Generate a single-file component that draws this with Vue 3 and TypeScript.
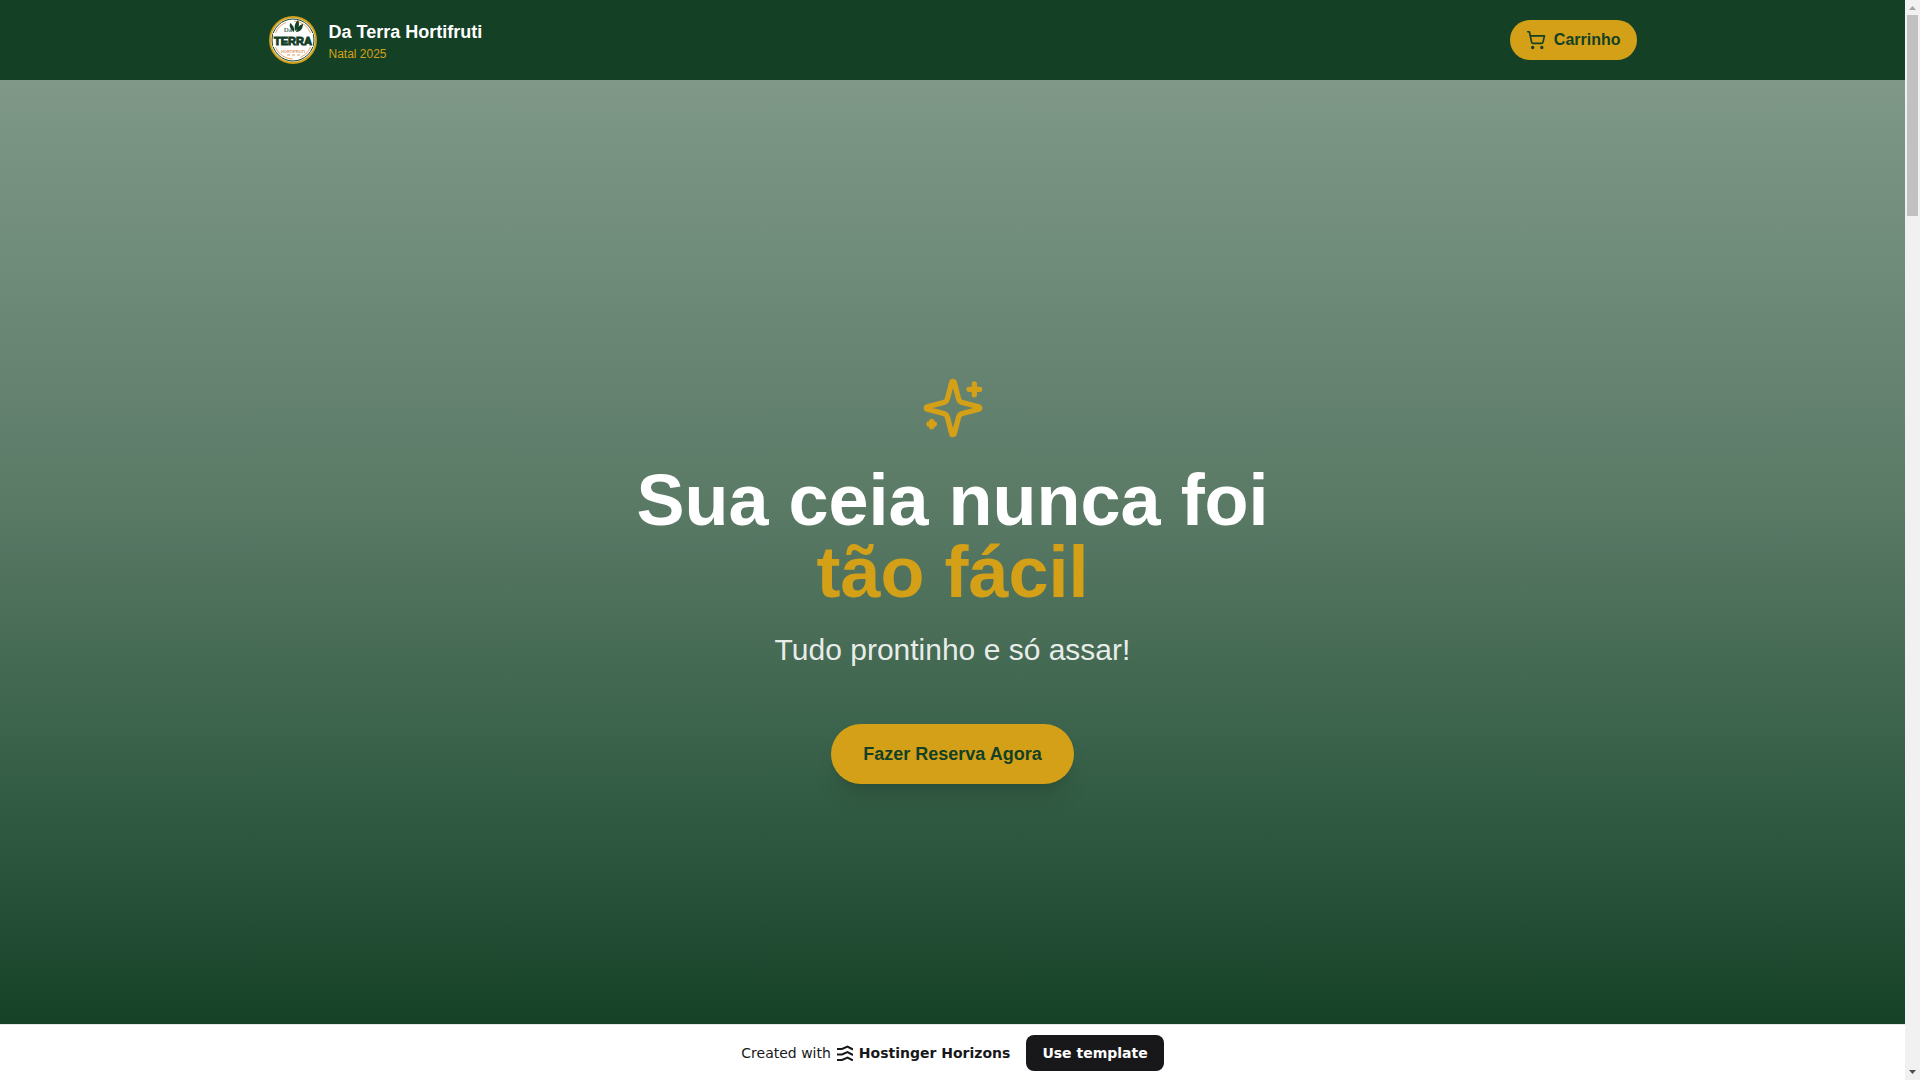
<script setup lang="ts">
const brand = { name: 'Da Terra Hortifruti', season: 'Natal 2025' }
</script>

<template>
  <div class="window">
    <div class="page">
      <header class="header">
        <div class="container">
          <div class="brand">
            <svg class="logo" viewBox="0 0 48 48" role="img" aria-label="Da Terra">
              <circle cx="24" cy="24" r="24" fill="#d4a017" />
              <circle cx="24" cy="24" r="22" fill="#fff" />
              <circle cx="24" cy="24" r="21" fill="none" stroke="#144026" stroke-width="1" />
              <circle cx="24" cy="24" r="19" fill="none" stroke="#e8a560" stroke-width="1" stroke-dasharray="22 8" />
              <path d="M4 17h40v14H4z" fill="#fff" />
              <text x="19" y="16" class="logo-da">Da</text>
              <path d="M25 16c-3-2-5-5-4-9 3 2 5 5 4 9zM26 15c-1-5 0-8 3-11 2 4 1 8-3 11zM27 16c1-4 3-7 7-8 0 5-3 8-7 8z" fill="#144026" />
              <text x="24" y="29" class="logo-terra">TERRA</text>
              <text x="24" y="37" class="logo-small">HORTIFRUTI</text>
              <path d="M18 39h3m2 0h3m2 0h3" stroke="#dc9a68" stroke-width="1" />
            </svg>
            <div>
              <div class="brand-name">{{ brand.name }}</div>
              <div class="brand-season">{{ brand.season }}</div>
            </div>
          </div>
          <button class="cart" type="button">
            <svg class="cart-icon" viewBox="0 0 24 24" aria-hidden="true">
              <circle cx="8" cy="21" r="1" />
              <circle cx="19" cy="21" r="1" />
              <path d="M2.05 2.05h2l2.66 12.42a2 2 0 0 0 2 1.58h9.78a2 2 0 0 0 1.95-1.57l1.65-7.43H5.12" />
            </svg>
            Carrinho
          </button>
        </div>
      </header>

      <main class="hero">
        <svg class="sparkles" viewBox="0 0 24 24" aria-hidden="true">
          <path d="M9.937 15.5A2 2 0 0 0 8.5 14.063l-6.135-1.582a.5.5 0 0 1 0-.962L8.5 9.936A2 2 0 0 0 9.937 8.5l1.582-6.135a.5.5 0 0 1 .963 0L14.063 8.5A2 2 0 0 0 15.5 9.937l6.135 1.581a.5.5 0 0 1 0 .964L15.5 14.063a2 2 0 0 0-1.437 1.437l-1.582 6.135a.5.5 0 0 1-.963 0z" />
          <path d="M20 3v4M22 5h-4M4 17v2M5 18H3" />
        </svg>
        <h1>Sua ceia nunca foi<br /><span>tão fácil</span></h1>
        <p>Tudo prontinho e só assar!</p>
        <button class="reserve" type="button">Fazer Reserva Agora</button>
      </main>

      <footer class="banner">
        <span>Created with</span>
        <svg class="waves" viewBox="0 0 16 16" aria-hidden="true">
          <path d="M0 4h5l5.500-2.500L16 4.500M0 9.500h5L10.500 7 16 10M0 15h5l5.500-2.500L16 15.500" />
        </svg>
        <strong>Hostinger Horizons</strong>
        <button class="template" type="button">Use template</button>
      </footer>
    </div>

    <div class="scrollbar" aria-hidden="true">
      <svg viewBox="0 0 15 15"><path d="M4 10h7L7.500 6z" fill="#a3a3a3" /></svg>
      <div class="thumb"></div>
      <svg class="down" viewBox="0 0 15 15"><path d="M4 5h7L7.500 9z" fill="#505050" /></svg>
    </div>
  </div>
</template>

<style>
body {
  margin: 0;
}
</style>

<style scoped>
.window {
  display: flex;
  min-height: 100vh;
  font-family: "Liberation Sans", Arial, sans-serif;
}
.page {
  flex: 1;
  display: flex;
  flex-direction: column;
}
button {
  border: 0;
  font-family: inherit;
  font-weight: 700;
  cursor: pointer;
}
.header {
  background: #144026;
}
.container {
  box-sizing: border-box;
  max-width: 1400px;
  height: 80px;
  margin: 0 auto;
  padding: 0 16px;
  display: flex;
  align-items: center;
  justify-content: space-between;
}
.brand {
  display: flex;
  align-items: center;
  gap: 12px;
}
.logo {
  width: 48px;
  height: 48px;
}
.logo-da {
  font: 700 7px "Liberation Serif", serif;
  text-anchor: middle;
  fill: #5d7b69;
}
.logo-terra {
  font: 700 11px "Liberation Sans", sans-serif;
  text-anchor: middle;
  fill: #144026;
  stroke: #144026;
  stroke-width: 1px;
}
.logo-small {
  font: 700 4px "Liberation Sans", sans-serif;
  text-anchor: middle;
  fill: #dc9a68;
}
.brand-name {
  font-size: 18px;
  line-height: 28px;
  font-weight: 700;
  color: #fff;
}
.brand-season {
  font-size: 12px;
  line-height: 16px;
  color: #d4a017;
}
.cart {
  display: flex;
  align-items: center;
  gap: 8px;
  height: 40px;
  padding: 0 16px;
  border-radius: 20px;
  background: #d4a017;
  color: #144026;
  font-size: 16px;
}
.cart-icon,
.sparkles {
  fill: none;
  stroke: currentColor;
  stroke-width: 2;
  stroke-linecap: round;
  stroke-linejoin: round;
}
.cart-icon {
  width: 20px;
  height: 20px;
}
.hero {
  flex: 1;
  display: flex;
  flex-direction: column;
  align-items: center;
  justify-content: center;
  padding-top: 56px;
  text-align: center;
  background: linear-gradient(to bottom, #7f9888 0%, #5a7a66 45%, #345d45 75%, #164228 100%);
}
.sparkles {
  width: 64px;
  height: 64px;
  color: #d4a017;
}
h1 {
  margin: 24px 0;
  font-size: 72px;
  line-height: 72px;
  font-weight: 700;
  color: #fff;
}
h1 span {
  color: #d4a017;
}
p {
  margin: 0 0 56px;
  font-size: 30px;
  line-height: 36px;
  color: rgba(255, 255, 255, 0.9);
}
.reserve {
  height: 60px;
  padding: 0 32px;
  border-radius: 30px;
  background: #d4a017;
  color: #144026;
  font-size: 18px;
  box-shadow: 0 20px 25px -5px rgba(0, 0, 0, 0.1), 0 8px 10px -6px rgba(0, 0, 0, 0.1);
}
.banner {
  box-sizing: border-box;
  height: 56px;
  border-top: 1px solid #e5e7eb;
  background: #fff;
  display: flex;
  align-items: center;
  justify-content: center;
  gap: 6px;
  font-family: "DejaVu Sans", sans-serif;
  font-size: 14px;
  color: #18181a;
}
.waves {
  width: 16px;
  height: 16px;
  fill: none;
  stroke: currentColor;
  stroke-width: 2;
}
.template {
  height: 36px;
  margin-left: 10px;
  padding: 0 16px;
  border-radius: 8px;
  background: #18181a;
  color: #fff;
  font-size: 14px;
}
.scrollbar {
  width: 15px;
  background: #f1f1f1;
  display: flex;
  flex-direction: column;
}
.scrollbar svg {
  width: 15px;
  height: 15px;
}
.thumb {
  height: 201px;
  margin: 0 2px;
  background: #c1c1c1;
}
.down {
  margin-top: auto;
}
</style>
